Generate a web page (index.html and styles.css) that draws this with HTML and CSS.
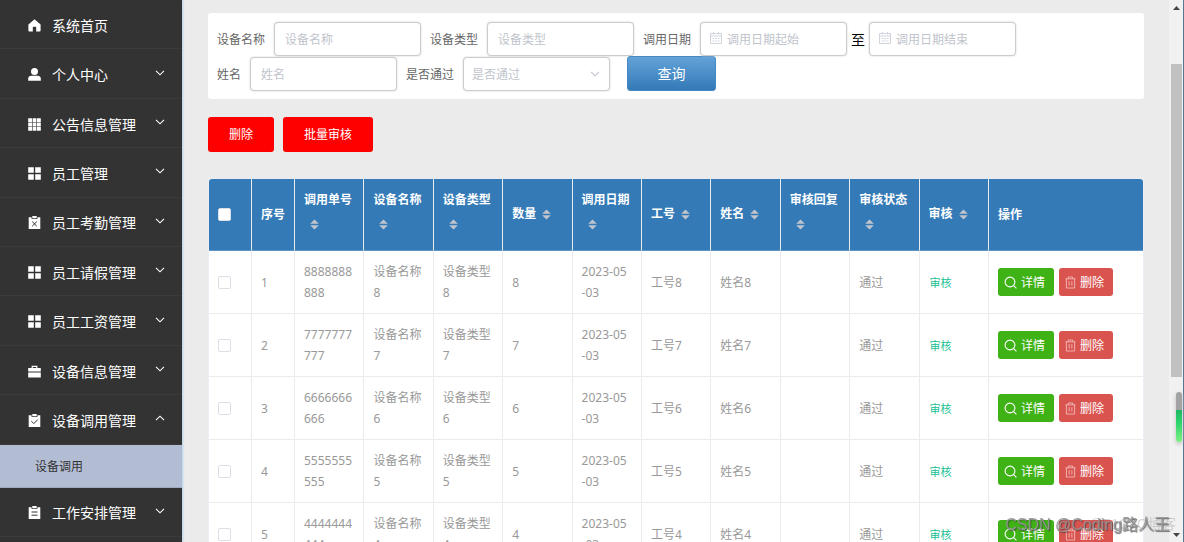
FILE: index.html
```html
<!DOCTYPE html>
<html lang="zh-CN">
<head>
<meta charset="utf-8">
<title>设备调用</title>
<link rel="stylesheet" href="styles.css">
</head>
<body>
<svg class="defs" aria-hidden="true">
  <symbol id="i-home" viewBox="0 0 13 13"><path d="M6.5 0.3 12.6 5.4V11.6Q12.6 12.6 11.6 12.6H8.2V8.6Q8.2 7.8 7.4 7.8H5.6Q4.8 7.8 4.8 8.6V12.6H1.400Q.4 12.600 .4 11.600V5.400Z"/></symbol>
  <symbol id="i-user" viewBox="0 0 13 13"><circle cx="6.5" cy="3.6" r="3.500"/><path d="M.2 12.700V10.600Q.4 7.800 3.400 7.800H9.600Q12.600 7.800 12.800 10.600V12.700Z"/></symbol>
  <symbol id="i-grid" viewBox="0 0 13 13"><path d="M.2.2h3.8v3.8H.2zM4.600.2h3.800v3.800H4.600zM9 .2h3.800v3.800H9zM.2 4.600h3.800v3.800H.2zM4.600 4.600h3.800v3.800H4.600zM9 4.600h3.800v3.800H9zM.2 9h3.800v3.800H.2zM4.600 9h3.800v3.800H4.600zM9 9h3.800v3.800H9z"/></symbol>
  <symbol id="i-menu" viewBox="0 0 13 13"><path d="M.2.2h5.600v5.600H.2zM7.200.2h5.600v5.600H7.200zM.2 7.200h5.600v5.600H.2zM7.200 7.200h5.600v5.600H7.200z"/></symbol>
  <symbol id="i-fail" viewBox="0 0 13 13"><path d="M.7 1.300H3.600V3H9.400V1.300H12.300V13H.7ZM4.300 0H8.700V2.200H4.300Z"/><path d="m4.200 5.600 4.600 4.600m0-4.600-4.600 4.600" stroke="#333" fill="none"/></symbol>
  <symbol id="i-done" viewBox="0 0 13 13"><path d="M.7 1.300H3.600V3H9.400V1.300H12.300V13H.7ZM4.300 0H8.700V2.200H4.300Z"/><path d="m3.400 7.200 2.400 2.400 4-4" stroke="#333" fill="none"/></symbol>
  <symbol id="i-order" viewBox="0 0 13 13"><path d="M.7 1.300H3.600V3H9.400V1.300H12.300V13H.7ZM4.300 0H8.700V2.200H4.300Z"/><path d="M3.500 6h6M3.500 9.200h6" stroke="#333" fill="none"/></symbol>
  <symbol id="i-case" viewBox="0 0 13 13"><path d="M3.600 3V.8H9.400V3H12.800V6.600H.2V3ZM4.800 3H8.200V2H4.800ZM.2 7.600H12.800V12.400H.2Z" fill-rule="evenodd"/></symbol>
  <symbol id="i-down" viewBox="0 0 10 6"><path d="m1 .8 4 4 4-4" fill="none" stroke="currentColor" stroke-width="1.1"/></symbol>
  <symbol id="i-up" viewBox="0 0 10 6"><path d="m1 5.2 4-4 4 4" fill="none" stroke="currentColor" stroke-width="1.1"/></symbol>
  <symbol id="i-date" viewBox="0 0 12 12"><path d="M.5 1.500h11v10H.5zM.5 4h11M3.500 0v2.500M8.500 0v2.500" fill="none" stroke="currentColor"/><path d="M2.500 6.500h7M2.500 9h7" fill="none" stroke="currentColor" stroke-dasharray="1.800 .8"/></symbol>
  <symbol id="i-sort" viewBox="0 0 9 11"><path d="M.2 4.700 4.500.4 8.800 4.700ZM.2 6.300H8.800L4.500 10.600Z"/></symbol>
  <symbol id="i-find" viewBox="0 0 13 13"><g fill="none" stroke="currentColor" stroke-width="1.1"><circle cx="6" cy="6" r="4.9"/><path d="m9.600 9.600 2.800 2.800"/></g></symbol>
  <symbol id="i-trash" viewBox="0 0 12 13"><path d="M.5 2.500h11M3.500 2.500v-2h5v2M1.500 2.500v10h9v-10M4.500 5v5M7.500 5v5" fill="none" stroke="currentColor" stroke-width=".9"/></symbol>
</svg>
<div class="app">
  <nav class="sidebar">
    <button class="item"><svg class="icon"><use href="#i-home"/></svg><span>系统首页</span></button>
    <button class="item"><svg class="icon"><use href="#i-user"/></svg><span>个人中心</span><svg class="arrow"><use href="#i-down"/></svg></button>
    <button class="item"><svg class="icon"><use href="#i-grid"/></svg><span>公告信息管理</span><svg class="arrow"><use href="#i-down"/></svg></button>
    <button class="item"><svg class="icon"><use href="#i-menu"/></svg><span>员工管理</span><svg class="arrow"><use href="#i-down"/></svg></button>
    <button class="item"><svg class="icon"><use href="#i-fail"/></svg><span>员工考勤管理</span><svg class="arrow"><use href="#i-down"/></svg></button>
    <button class="item"><svg class="icon"><use href="#i-menu"/></svg><span>员工请假管理</span><svg class="arrow"><use href="#i-down"/></svg></button>
    <button class="item"><svg class="icon"><use href="#i-menu"/></svg><span>员工工资管理</span><svg class="arrow"><use href="#i-down"/></svg></button>
    <button class="item"><svg class="icon"><use href="#i-case"/></svg><span>设备信息管理</span><svg class="arrow"><use href="#i-down"/></svg></button>
    <button class="item"><svg class="icon"><use href="#i-done"/></svg><span>设备调用管理</span><svg class="arrow"><use href="#i-up"/></svg></button>
    <a class="subitem" href="#">设备调用</a>
    <button class="item"><svg class="icon"><use href="#i-order"/></svg><span>工作安排管理</span><svg class="arrow"><use href="#i-down"/></svg></button>
  </nav>

  <main class="content">
    <form class="filters">
      <div class="field"><label for="f-name">设备名称</label><input class="box" id="f-name" placeholder="设备名称"></div>
      <div class="field"><label for="f-type">设备类型</label><input class="box" id="f-type" placeholder="设备类型"></div>
      <div class="field">
        <label for="f-from">调用日期</label>
        <div class="range">
          <div class="wrap"><input class="box dated" id="f-from" placeholder="调用日期起始"><svg class="cal"><use href="#i-date"/></svg></div>
          <span>至</span>
          <div class="wrap"><input class="box dated" aria-label="调用日期结束" placeholder="调用日期结束"><svg class="cal"><use href="#i-date"/></svg></div>
        </div>
      </div>
      <div class="field"><label for="f-person">姓名</label><input class="box" id="f-person" placeholder="姓名"></div>
      <div class="field"><label for="f-pass">是否通过</label><div class="wrap"><select class="box" id="f-pass"><option>是否通过</option></select><svg class="caret"><use href="#i-down"/></svg></div></div>
      <button type="button" class="query">查询</button>
    </form>

    <div class="tools"><button class="danger">删除</button><button class="danger">批量审核</button></div>

    <div class="sheet">
      <table>
        <colgroup><col class="c-check"><col class="c-index"><col span="10"><col class="c-ops"></colgroup>
        <thead>
          <tr>
            <th><input type="checkbox" aria-label="全选"></th>
            <th>序号</th>
            <th>调用单号<span class="sort"><svg><use href="#i-sort"/></svg></span></th>
            <th>设备名称<span class="sort"><svg><use href="#i-sort"/></svg></span></th>
            <th>设备类型<span class="sort"><svg><use href="#i-sort"/></svg></span></th>
            <th>数量<span class="sort"><svg><use href="#i-sort"/></svg></span></th>
            <th>调用日期<span class="sort"><svg><use href="#i-sort"/></svg></span></th>
            <th>工号<span class="sort"><svg><use href="#i-sort"/></svg></span></th>
            <th>姓名<span class="sort"><svg><use href="#i-sort"/></svg></span></th>
            <th>审核回复<span class="sort"><svg><use href="#i-sort"/></svg></span></th>
            <th>审核状态<span class="sort"><svg><use href="#i-sort"/></svg></span></th>
            <th>审核<span class="sort"><svg><use href="#i-sort"/></svg></span></th>
            <th>操作</th>
          </tr>
        </thead>
        <tbody>
          <tr><td><input type="checkbox" aria-label="选择第1行"></td><td>1</td><td>8888888888</td><td>设备名称8</td><td>设备类型8</td><td>8</td><td>2023-05-03</td><td>工号8</td><td>姓名8</td><td></td><td>通过</td><td><a class="audit" href="#">审核</a></td><td><div class="ops"><button class="view"><svg><use href="#i-find"/></svg>详情</button><button class="remove"><svg><use href="#i-trash"/></svg>删除</button></div></td></tr>
          <tr><td><input type="checkbox" aria-label="选择第2行"></td><td>2</td><td>7777777777</td><td>设备名称7</td><td>设备类型7</td><td>7</td><td>2023-05-03</td><td>工号7</td><td>姓名7</td><td></td><td>通过</td><td><a class="audit" href="#">审核</a></td><td><div class="ops"><button class="view"><svg><use href="#i-find"/></svg>详情</button><button class="remove"><svg><use href="#i-trash"/></svg>删除</button></div></td></tr>
          <tr><td><input type="checkbox" aria-label="选择第3行"></td><td>3</td><td>6666666666</td><td>设备名称6</td><td>设备类型6</td><td>6</td><td>2023-05-03</td><td>工号6</td><td>姓名6</td><td></td><td>通过</td><td><a class="audit" href="#">审核</a></td><td><div class="ops"><button class="view"><svg><use href="#i-find"/></svg>详情</button><button class="remove"><svg><use href="#i-trash"/></svg>删除</button></div></td></tr>
          <tr><td><input type="checkbox" aria-label="选择第4行"></td><td>4</td><td>5555555555</td><td>设备名称5</td><td>设备类型5</td><td>5</td><td>2023-05-03</td><td>工号5</td><td>姓名5</td><td></td><td>通过</td><td><a class="audit" href="#">审核</a></td><td><div class="ops"><button class="view"><svg><use href="#i-find"/></svg>详情</button><button class="remove"><svg><use href="#i-trash"/></svg>删除</button></div></td></tr>
          <tr><td><input type="checkbox" aria-label="选择第5行"></td><td>5</td><td>4444444444</td><td>设备名称4</td><td>设备类型4</td><td>4</td><td>2023-05-03</td><td>工号4</td><td>姓名4</td><td></td><td>通过</td><td><a class="audit" href="#">审核</a></td><td><div class="ops"><button class="view"><svg><use href="#i-find"/></svg>详情</button><button class="remove"><svg><use href="#i-trash"/></svg>删除</button></div></td></tr>
        </tbody>
      </table>
    </div>
  </main>

  <div class="scrollbar">
    <div class="tip up"></div>
    <div class="thumb"></div>
    <div class="tip down"></div>
    <div class="gauge"></div>
  </div>
</div>
<div class="mark faint">@51CTO博客</div>
<div class="mark">CSDN @Coding路人王</div>
</body>
</html>
```
FILE: styles.css
```css
* { box-sizing: border-box; }

body {
  margin: 0;
  height: 100vh;
  overflow: hidden;
  background: #ebebeb;
  color: #666;
  font: 12px/21px "Noto Sans", "Noto Sans CJK SC", sans-serif;
}

button, input, select { font: inherit; margin: 0; }
button { border: 0; cursor: pointer; }
a { text-decoration: none; }
svg { display: block; fill: currentColor; flex: none; }
.defs { position: absolute; width: 0; height: 0; }

.app { display: flex; height: 100vh; }

/* Sidebar */
.sidebar {
  display: flex;
  flex-direction: column;
  flex: none;
  width: 182px;
  padding-bottom: 5px;
  background: #333;
  box-shadow: 1px 0 2px #b5d2f0;
}
.item {
  display: flex;
  align-items: center;
  flex: 1;
  gap: 11px;
  padding: 2px 17px 0 28px;
  border-bottom: 1px solid #3b3b3b;
  background: none;
  color: #fff;
  font-size: 14px;
  text-align: left;
}
.icon { width: 13px; height: 13px; }
.arrow { width: 10px; height: 6px; margin: 0 0 4px auto; }
.subitem {
  flex: none;
  padding: 11px 35px 10px;
  border-bottom: 1px solid #a0a9bc;
  background: #b2bdd4;
  color: #333;
}

/* Content */
.content { flex: 1; min-width: 0; padding: 13px 25px 0 26px; overflow: hidden; }

.filters {
  display: flex;
  flex-wrap: wrap;
  align-items: flex-end;
  column-gap: 9px;
  padding: 9px 9px 8px;
  border-radius: 3px;
  background: #fff;
}
.field { display: flex; align-items: center; gap: 9px; }
.range { display: flex; align-items: center; gap: 4px; color: #000; font-size: 14px; }
.wrap { position: relative; font-size: 12px; }
.box {
  display: block;
  width: 147px;
  height: 34px;
  padding: 0 10px;
  border: 1px solid #ccc;
  border-radius: 4px;
  background: #fff;
  box-shadow: 0 0 2px #ccc;
  color: #666;
  appearance: none;
}
select.box { padding: 0 8px; color: #c0c4cc; }
.box::placeholder { color: #c0c4cc; opacity: 1; }
.dated { padding-left: 26px; }
.cal { position: absolute; left: 10px; top: 10px; width: 12px; height: 12px; color: #d0d4dc; }
.caret { position: absolute; right: 10px; top: 14px; width: 10px; height: 6px; color: #c0c4cc; }
.query {
  width: 89px;
  height: 35px;
  margin-left: 8px;
  border: 1px solid #4289c6;
  border-radius: 3px;
  background: linear-gradient(#64a2d8, #337ab7);
  color: #fff;
  font-size: 14px;
}

.tools { display: flex; gap: 9px; margin: 18px 0 26px; }
.danger {
  height: 35px;
  padding: 0 21px;
  border-radius: 3px;
  background: #f00;
  color: #fff;
}

/* Table */
.sheet {
  overflow: hidden;
  border: 1px solid #ebeef5;
  border-radius: 4px 4px 0 0;
  background: #fff;
}
table { width: 100%; table-layout: fixed; border-collapse: separate; border-spacing: 0; }
.c-check { width: 43px; }
.c-index { width: 43px; }
.c-ops { width: 154px; }
th, td {
  padding: 10px 11px 10px 9px;
  border-right: 1px solid #ebebeb;
  border-bottom: 1px solid #ebebeb;
  text-align: left;
  word-break: break-all;
}
th:last-child, td:last-child { border-right: 0; }
th:nth-child(-n+2), td:nth-child(-n+2) { padding-right: 4px; }
th {
  padding-bottom: 11px;
  background: #337ab7;
  border-bottom: 1px solid #5b95c6;
  color: #fff;
}
td { color: #999; }
.sort {
  display: inline-flex;
  align-items: center;
  justify-content: center;
  width: 21px;
  height: 29px;
  color: #c0c4cc;
  vertical-align: middle;
}
.sort svg { width: 9px; height: 11px; }
input[type="checkbox"] {
  display: block;
  width: 13px;
  height: 13px;
  border: 1px solid #dcdfe6;
  border-radius: 2px;
  background: #fff;
  appearance: none;
}
.audit { padding-left: 1px; color: #1abf93; font-size: 11px; }
.ops { display: flex; gap: 5px; }
.ops button {
  display: flex;
  align-items: center;
  gap: 4px;
  height: 28px;
  padding: 0 9px 0 6px;
  border-radius: 3px;
  color: #fff;
  white-space: nowrap;
}
.ops .view { background: #3fb216; }
.ops .remove { background: #d9534f; }
.ops svg { width: 13px; height: 13px; }
.ops .remove svg { width: 11px; color: #f3c5c3; }

/* Scrollbar */
.scrollbar {
  position: relative;
  display: flex;
  flex-direction: column;
  flex: none;
  width: 15px;
  padding: 6px 1px 5px 2px;
  border-right: 1px solid #587694;
  background: #f1f1f1;
}
.tip { width: 7px; height: 4px; margin-left: 2px; background: #444; }
.up { clip-path: polygon(50% 0, 100% 100%, 0 100%); margin-bottom: 54px; }
.down { clip-path: polygon(0 0, 100% 0, 50% 100%); margin-top: auto; }
.thumb { height: 59%; background: #c1c1c1; }
.gauge {
  position: absolute;
  right: 1px;
  top: 392px;
  width: 6px;
  height: 50px;
  border-radius: 3px;
  background: linear-gradient(#a3a3a3 36%, #1fb563 36%, #2bd36c 60%, #7cf082);
  box-shadow: 0 2px 4px #bbb;
}

/* Watermarks */
.mark {
  position: fixed;
  right: 14px;
  bottom: 7px;
  color: rgba(150, 150, 150, .9);
  font-family: "Liberation Sans", "Noto Sans CJK SC", sans-serif;
  font-size: 16px;
  text-shadow: 1px 1px 1px rgba(60, 60, 60, .7);
  pointer-events: none;
}
.faint {
  right: 8px;
  color: rgba(150, 150, 150, .4);
  font-size: 14px;
  text-shadow: none;
}
```
